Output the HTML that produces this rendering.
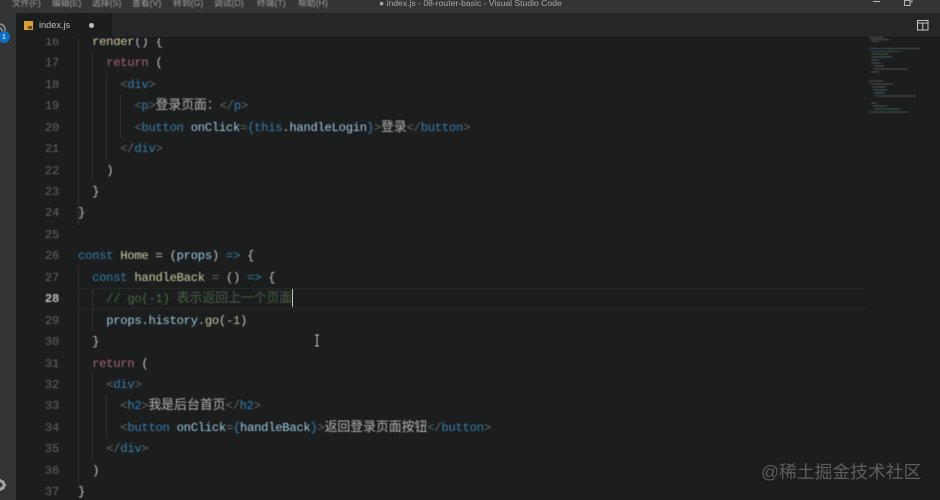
<!DOCTYPE html>
<html><head><meta charset="utf-8">
<style>
html,body{margin:0;padding:0;background:#1c1e1e}
#r{position:relative;width:940px;height:500px;overflow:hidden;background:#1c1e1e;font-family:"Liberation Sans","Noto Sans CJK SC",sans-serif}
.a{position:absolute}
.l{position:absolute;left:78px;margin-top:1px;height:21.45px;line-height:21.45px;font-family:"Liberation Mono","Noto Sans CJK SC",monospace;font-size:12.2px;letter-spacing:-.27px;white-space:pre;color:#c8c8c8;filter:blur(.4px)}
.n{position:absolute;left:30px;margin-top:1px;width:29px;text-align:right;height:21.45px;line-height:21.45px;font-family:"Liberation Mono",monospace;font-size:12.2px;letter-spacing:-.27px;color:#626565;filter:blur(.4px)}
.c{font-size:12.85px;letter-spacing:0;line-height:0;font-family:"Noto Sans CJK SC",sans-serif;color:#b4b4b4}
.g{position:absolute;width:1px;background:#2f3131}
.k{color:#2f80ae}.m{color:#ac6284}.t{color:#357fb2}.b{color:#666969}.y{color:#cbcba0}.v{color:#9ccae2}.w{color:#c4c4c4}.o{color:#2f80ae}.q{color:#4a7040}.q .c{color:#4a5e46}.u{color:#a8bf9c}
.mi{position:absolute;filter:blur(.4px);font-size:8.8px;line-height:12px;color:#a0a0a0;top:-3.5px}
</style></head><body>
<div id="r">
<!-- guides -->
<div class="g" style="left:78px;top:38px;height:187px"></div>
<div class="g" style="left:78px;top:267px;height:214px"></div>
<div class="g" style="left:92px;top:52px;height:128px"></div>
<div class="g" style="left:106px;top:74px;height:86px"></div>
<div class="g" style="left:120px;top:95px;height:43px"></div>
<div class="g" style="left:92px;top:288px;height:43px"></div>
<div class="g" style="left:92px;top:373px;height:87px"></div>
<div class="g" style="left:106px;top:395px;height:43px"></div>
<!-- current line -->
<div class="a" style="left:78px;top:288px;width:788px;height:19px;border-top:1px solid #252727;border-bottom:1px solid #252727"></div>

<div class="n" style="top:30.8px">16</div><div class="l" style="top:30.8px">  <span class="y">render</span><span class="w">() {</span></div>
<div class="n" style="top:52.25px">17</div><div class="l" style="top:52.25px">    <span class="m">return</span> <span class="w">(</span></div>
<div class="n" style="top:73.7px">18</div><div class="l" style="top:73.7px">      <span class="b">&lt;</span><span class="t">div</span><span class="b">&gt;</span></div>
<div class="n" style="top:95.15px">19</div><div class="l" style="top:95.15px">        <span class="b">&lt;</span><span class="t">p</span><span class="b">&gt;</span><span class="c">登录页面：</span><span class="b">&lt;/</span><span class="t">p</span><span class="b">&gt;</span></div>
<div class="n" style="top:116.6px">20</div><div class="l" style="top:116.6px">        <span class="b">&lt;</span><span class="t">button</span> <span class="v">onClick</span><span class="b">=</span><span class="t">{this</span><span class="w">.</span><span class="v">handleLogin</span><span class="t">}</span><span class="b">&gt;</span><span class="c">登录</span><span class="b">&lt;/</span><span class="t">button</span><span class="b">&gt;</span></div>
<div class="n" style="top:138.05px">21</div><div class="l" style="top:138.05px">      <span class="b">&lt;/</span><span class="t">div</span><span class="b">&gt;</span></div>
<div class="n" style="top:159.5px">22</div><div class="l" style="top:159.5px">    <span class="w">)</span></div>
<div class="n" style="top:180.95px">23</div><div class="l" style="top:180.95px">  <span class="w">}</span></div>
<div class="n" style="top:202.4px">24</div><div class="l" style="top:202.4px"><span class="w">}</span></div>
<div class="n" style="top:223.85px">25</div>
<div class="n" style="top:245.3px">26</div><div class="l" style="top:245.3px"><span class="k">const</span> <span class="y">Home</span> <span class="w">=</span> <span class="w">(</span><span class="v">props</span><span class="w">)</span> <span class="o">=&gt;</span> <span class="w">{</span></div>
<div class="n" style="top:266.75px">27</div><div class="l" style="top:266.75px">  <span class="k">const</span> <span class="y">handleBack</span> <span class="b">=</span> <span class="w">()</span> <span class="o">=&gt;</span> <span class="w">{</span></div>
<div class="n" style="top:288.2px;color:#bcbcbc;font-weight:bold">28</div><div class="l" style="top:288.2px">    <span class="q">// go(-1) <span class="c">表示返回上一个页面</span></span></div>
<div class="n" style="top:309.65px">29</div><div class="l" style="top:309.65px">    <span class="v">props</span><span class="w">.</span><span class="v">history</span><span class="w">.</span><span class="y">go</span><span class="w">(-</span><span class="u">1</span><span class="w">)</span></div>
<div class="n" style="top:331.1px">30</div><div class="l" style="top:331.1px">  <span class="w">}</span></div>
<div class="n" style="top:352.55px">31</div><div class="l" style="top:352.55px">  <span class="m">return</span> <span class="w">(</span></div>
<div class="n" style="top:374px">32</div><div class="l" style="top:374px">    <span class="b">&lt;</span><span class="t">div</span><span class="b">&gt;</span></div>
<div class="n" style="top:395.45px">33</div><div class="l" style="top:395.45px">      <span class="b">&lt;</span><span class="t">h2</span><span class="b">&gt;</span><span class="c">我是后台首页</span><span class="b">&lt;/</span><span class="t">h2</span><span class="b">&gt;</span></div>
<div class="n" style="top:416.9px">34</div><div class="l" style="top:416.9px">      <span class="b">&lt;</span><span class="t">button</span> <span class="v">onClick</span><span class="b">=</span><span class="t">{</span><span class="v">handleBack</span><span class="t">}</span><span class="b">&gt;</span><span class="c">返回登录页面按钮</span><span class="b">&lt;/</span><span class="t">button</span><span class="b">&gt;</span></div>
<div class="n" style="top:438.35px">35</div><div class="l" style="top:438.35px">    <span class="b">&lt;/</span><span class="t">div</span><span class="b">&gt;</span></div>
<div class="n" style="top:459.8px">36</div><div class="l" style="top:459.8px">  <span class="w">)</span></div>
<div class="n" style="top:481.25px">37</div><div class="l" style="top:481.25px"><span class="w">}</span></div>

<!-- cursor and I-beam -->
<div class="a" style="left:292px;top:289px;width:1px;height:18px;background:#c0c0c0"></div>
<svg class="a" style="left:312px;top:334px" width="10" height="13" viewBox="0 0 10 13"><path d="M3 1h4M5 1v11M3 12h4" stroke="#b8b8b8" stroke-width="1" fill="none"/></svg>

<!-- tab bar -->
<div class="a" style="left:0;top:13px;width:940px;height:24px;background:#252727;border-bottom:1px solid #171818"></div>
<div class="a" style="left:16px;top:13px;width:96px;height:25px;background:#1c1e1e"></div>
<div class="a" style="left:24px;top:21px;width:9px;height:9px;background:#d9a032;filter:blur(.3px)"></div>
<div class="a" style="left:28px;top:26px;width:4px;height:3px;background:#6a5020"></div>
<div class="a" style="left:39px;top:18px;font-size:9.2px;line-height:15px;color:#bcbcbc;filter:blur(.35px)">index.js</div>
<div class="a" style="left:89px;top:23px;width:5px;height:5px;border-radius:50%;background:#c0c0c0"></div>
<svg class="a" style="left:917px;top:20px" width="12" height="11" viewBox="0 0 12 11"><path d="M.5.5h10.5v9.5H.5zM.5 3h10.5M5.75 3v7" stroke="#c8c8c8" stroke-width="1" fill="none"/></svg>

<!-- title bar -->
<div class="a" style="left:0;top:0;width:940px;height:13px;background:#333535"></div>
<span class="mi" style="left:12px">文件(F)</span>
<span class="mi" style="left:52px">编辑(E)</span>
<span class="mi" style="left:92px">选择(S)</span>
<span class="mi" style="left:132px">查看(V)</span>
<span class="mi" style="left:173px">转到(G)</span>
<span class="mi" style="left:214px">调试(D)</span>
<span class="mi" style="left:257px">终端(T)</span>
<span class="mi" style="left:298px">帮助(H)</span>
<div class="a" style="left:379px;top:-3px;font-size:8.6px;line-height:12px;color:#a8a8a8;white-space:pre;filter:blur(.35px)">● index.js - 08-router-basic - Visual Studio Code</div>
<div class="a" style="left:873px;top:1px;width:7px;height:1px;background:#bbb"></div>
<svg class="a" style="left:904px;top:0" width="9" height="6" viewBox="0 0 9 6"><path d="M.5.5h5.5v5H.5zM2.5.5V0M6 2h2V0" stroke="#b5b5b5" fill="none"/></svg>

<!-- activity bar -->
<div class="a" style="left:0;top:13px;width:16px;height:487px;background:#333535"></div>
<svg class="a" style="left:0;top:20px" width="8" height="16" viewBox="0 0 8 16"><path d="M-2 4a6 6 0 0 1 7 5v5M-2 8a3 3 0 0 1 4 3v3" stroke="#8f9090" stroke-width="1.6" fill="none"/></svg>
<div class="a" style="left:-2px;top:31px;width:12px;height:12px;border-radius:50%;background:#0a6fc2;color:#fff;font-size:7.5px;line-height:12px;text-align:center">1</div>
<svg class="a" style="left:0;top:478px" width="8" height="14" viewBox="0 0 8 14"><circle cx="0" cy="7" r="4" stroke="#a2a2a2" stroke-width="3" fill="none"/><path d="M0 1v2M0 11v2M4 3L3 4M4 11L3 10M6 7H4" stroke="#a2a2a2" stroke-width="2"/></svg>

<!-- minimap -->
<svg class="a" style="left:868px;top:37px;filter:blur(.4px);opacity:.7" width="56" height="76" viewBox="0 0 56 76" fill="none" stroke-width="1">
<path d="M1 .5h14M3 2.5h18M3 4.5h8" stroke="#6c6c60"/>
<path d="M1 11.5h12" stroke="#3a7296"/><path d="M14 11.5h38" stroke="#5a6a70"/>
<path d="M3 14.5h30" stroke="#3f6a5a"/><path d="M4 17h16" stroke="#3e7a4c"/><path d="M4 20h20" stroke="#5a7a88"/>
<path d="M3 23h8M3 26h10M6 29h10M6 32h34M3 35h8" stroke="#65686a"/>
<path d="M1 44h14M3 47h22M4 50h14M5 53h14" stroke="#656a60"/>
<path d="M6 56h10" stroke="#4a7c9a"/><path d="M8 59h40" stroke="#5a6a70"/>
<path d="M3 66h6M5 69h14" stroke="#6a6a66"/>
<path d="M6 72h26" stroke="#3f7a5c"/><path d="M1 75h40" stroke="#5a6a70"/>
</svg>

<!-- watermark -->
<div class="a" style="left:761px;top:460px;font-size:17.8px;line-height:24px;color:#5e5e5e;white-space:pre;font-family:'Liberation Sans','Noto Sans CJK SC',sans-serif;filter:blur(.3px)">@稀土掘金技术社区</div>
</div>
</body></html>
